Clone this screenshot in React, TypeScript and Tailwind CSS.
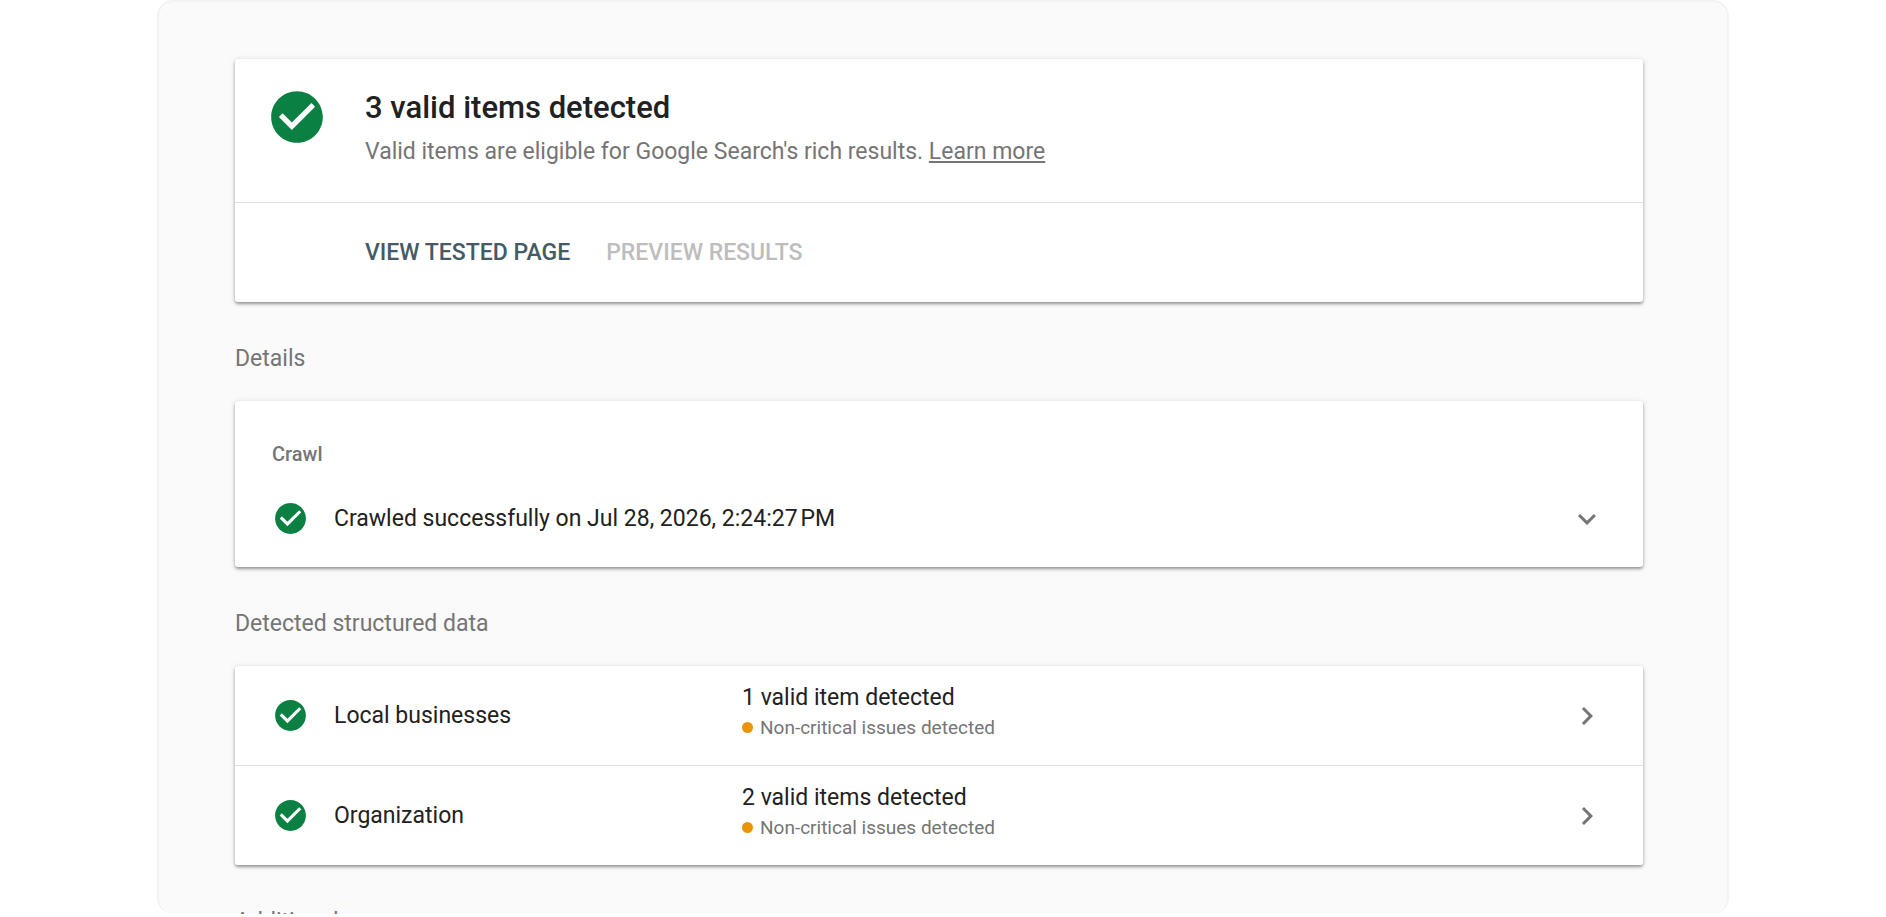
import type { ReactNode } from "react";

const results = [
  { name: "Local businesses", summary: "1 valid item detected" },
  { name: "Organization", summary: "2 valid items detected" },
];

function CheckCircle({ className }: { className: string }) {
  return (
    <svg viewBox="0 0 24 24" aria-hidden="true" className={`shrink-0 fill-[#0b8043] ${className}`}>
      <circle cx="12" cy="12" r="8" fill="#fff" />
      <path d="M12 2C6.48 2 2 6.48 2 12s4.48 10 10 10 10-4.48 10-10S17.52 2 12 2zm-2 15l-5-5 1.41-1.41L10 14.17l7.59-7.59L19 8l-9 9z" />
    </svg>
  );
}

function Chevron({ d }: { d: string }) {
  return (
    <svg viewBox="0 0 24 24" aria-hidden="true" className="size-9 shrink-0 fill-[#757575]">
      <path d={d} />
    </svg>
  );
}

function Card({ children }: { children: ReactNode }) {
  return (
    <div className="rounded-[3px] bg-white shadow-[0_2px_3px_rgba(0,0,0,0.34),0_1px_6px_rgba(0,0,0,0.12)]">
      {children}
    </div>
  );
}

function SectionTitle({ children }: { children: ReactNode }) {
  return <h2 className="mt-[43px] mb-7 text-[23px] leading-7 text-[#757575]">{children}</h2>;
}

export default function App() {
  return (
    <div className="h-screen bg-white pb-[3px] font-[Roboto,sans-serif] text-[#212121]">
      <main className="mx-auto h-full max-w-[1572px] overflow-hidden rounded-2xl border-2 border-b-0 border-[#f3f3f3] bg-[#fafafa] pt-[57px] pr-21 pl-19">
        <Card>
          <div className="flex gap-[37px] px-[31px] pt-[27px] pb-8">
            <CheckCircle className="size-[62px]" />
            <div>
              <h1 className="text-[31px] leading-11 font-medium">3 valid items detected</h1>
              <p className="mt-1 text-[23px] leading-9 text-[#757575]">
                Valid items are eligible for Google Search's rich results.{" "}
                <a href="#" className="underline decoration-2 underline-offset-2">
                  Learn more
                </a>
              </p>
            </div>
          </div>
          <div className="flex h-[100px] items-center gap-9 border-t border-[#e0e0e0] pl-[130px] text-[23px] leading-7 font-medium">
            <button type="button" className="text-[#455a64]">
              VIEW TESTED PAGE
            </button>
            <button type="button" disabled className="text-[#bdbdbd]">
              PREVIEW RESULTS
            </button>
          </div>
        </Card>

        <SectionTitle>Details</SectionTitle>
        <Card>
          <h3 className="px-[37px] pt-[37px] text-[20px] leading-8 font-medium text-[#757575]">Crawl</h3>
          <button
            type="button"
            aria-expanded="false"
            className="flex h-[97px] w-full items-center gap-[25px] pr-[38px] pl-[37px] text-left text-[23px] leading-7"
          >
            <CheckCircle className="size-[37px]" />
            <span className="grow">Crawled successfully on Jul 28, 2026, 2:24:27{"\u202f"}PM</span>
            <Chevron d="M7.41 8.59L12 13.17l4.59-4.58L18 10l-6 6-6-6 1.41-1.41z" />
          </button>
        </Card>

        <SectionTitle>Detected structured data</SectionTitle>
        <Card>
          <div className="grid gap-px overflow-hidden rounded-[3px] bg-[#e0e0e0]">
            {results.map((r) => (
              <button
                key={r.name}
                type="button"
                className="flex h-[99px] items-center gap-[25px] bg-white pr-[38px] pl-[37px] text-left"
              >
                <CheckCircle className="size-[37px]" />
                <span className="w-[383px] text-[23px] leading-7">{r.name}</span>
                <span className="grow pb-2">
                  <span className="block text-[23px] leading-8">{r.summary}</span>
                  <span className="flex items-center gap-[7px] text-[19px] leading-7 text-[#757575]">
                    <span className="size-[11px] rounded-full bg-[#ea9509]" />
                    Non-critical issues detected
                  </span>
                </span>
                <Chevron d="M8.59 16.59L13.17 12 8.59 7.41 10 6l6 6-6 6-1.41-1.41z" />
              </button>
            ))}
          </div>
        </Card>

        <SectionTitle>Additional resources</SectionTitle>
      </main>
    </div>
  );
}
